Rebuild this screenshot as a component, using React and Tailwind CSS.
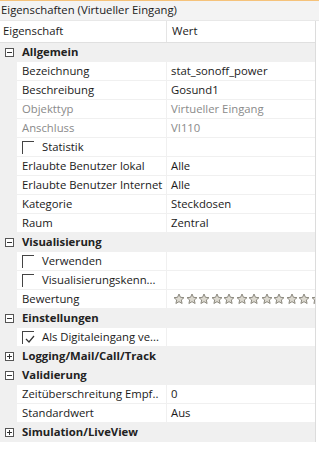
import React from "react";

const F = { fontFamily: '"Open Sans", "Noto Sans", sans-serif' };

function Box({ plus }) {
  return (
    <div className="w-[9px] h-[9px] border border-[#555] relative bg-white">
      <div className="absolute left-[1px] top-[3px] w-[5px] h-[1px] bg-[#333]" />
      {plus && <div className="absolute left-[3px] top-[1px] w-[1px] h-[5px] bg-[#333]" />}
    </div>
  );
}

function Group({ label, plus }) {
  return (
    <div className="h-[19px] flex items-center bg-[#f0f0f0] border-b border-[#f0f0f0]">
      <div className="w-[17px] flex justify-center pl-[1px]">
        <Box plus={plus} />
      </div>
      <div className="pl-[5px] font-bold text-[#222]">{label}</div>
    </div>
  );
}

function Check({ checked }) {
  return (
    <div className="w-[12px] h-[13px] shrink-0 border-l border-t border-[#444] relative mr-[8px]">
      {checked && (
        <svg width="10" height="10" viewBox="0 0 10 10" className="absolute left-[2px] top-[2px]">
          <path d="M1 5 L4 8 L9 2" fill="none" stroke="#333" strokeWidth="1.2" />
        </svg>
      )}
    </div>
  );
}

function Row({ name, value, gray, check, checked, children }) {
  return (
    <div className="h-[19px] flex bg-[#f0f0f0]">
      <div className="w-[17px] shrink-0" />
      <div className="flex-1 min-w-0 flex bg-white border-b border-[#f0f0f0]">
        <div className={`w-[150px] shrink-0 flex items-center pl-[5px] border-r border-[#f0f0f0] whitespace-nowrap overflow-hidden ${gray ? "text-[#8a8a8a]" : "text-[#1a1a1a]"}`}>
          {check && <Check checked={checked} />}
          {name}
        </div>
        <div className={`flex-1 min-w-0 flex items-center pl-[4px] whitespace-nowrap overflow-hidden ${gray ? "text-[#8a8a8a]" : "text-[#1a1a1a]"}`}>
          {value}
          {children}
        </div>
      </div>
    </div>
  );
}

function Star() {
  return (
    <svg width="12" height="12" viewBox="0 0 24 24" className="shrink-0">
      <path
        d="M12 2 L14.9 8.6 L22 9.3 L16.6 14 L18.2 21 L12 17.3 L5.8 21 L7.4 14 L2 9.3 L9.1 8.6 Z"
        fill="#dcd9d0"
        stroke="#8d8a80"
        strokeWidth="2"
        strokeLinejoin="round"
      />
    </svg>
  );
}

export default function App() {
  return (
    <div className="w-[319px] h-[457px] bg-white text-[11.3px] overflow-hidden" style={F}>
      <div className="h-[1px] bg-[#f5c27a]" />
      <div className="h-[20px] bg-[#f3f3f3] flex items-center pl-[1px] text-[#1a1a1a] border-b border-[#e8e8e8]">
        Eigenschaften (Virtueller Eingang)
      </div>
      <div className="flex">
        <div className="w-[316px] border-r border-[#dcdcdc]">
          <div className="h-[22px] flex border-b border-[#e0e0e0] bg-white">
            <div className="w-[167px] pl-[3px] flex items-center border-r border-[#e5e5e5] text-[#1a1a1a]">Eigenschaft</div>
            <div className="flex-1 pl-[5px] flex items-center text-[#1a1a1a]">Wert</div>
          </div>
          <Group label="Allgemein" />
          <Row name="Bezeichnung" value="stat_sonoff_power" />
          <Row name="Beschreibung" value="Gosund1" />
          <Row name="Objekttyp" value="Virtueller Eingang" gray />
          <Row name="Anschluss" value="VI110" gray />
          <Row name="Statistik" check />
          <Row name="Erlaubte Benutzer lokal" value="Alle" />
          <Row name="Erlaubte Benutzer Internet" value="Alle" />
          <Row name="Kategorie" value="Steckdosen" />
          <Row name="Raum" value="Zentral" />
          <Group label="Visualisierung" />
          <Row name="Verwenden" check />
          <Row name="Visualisierungskenn..." check />
          <Row name="Bewertung">
            <div className="flex pl-[2px] gap-[0.5px]">
              {Array.from({ length: 13 }).map((_, i) => (
                <Star key={i} />
              ))}
            </div>
          </Row>
          <Group label="Einstellungen" />
          <Row name="Als Digitaleingang ve..." check checked />
          <Group label="Logging/Mail/Call/Track" plus />
          <Group label="Validierung" />
          <Row name="Zeitüberschreitung Empf.." value="0" />
          <Row name="Standardwert" value="Aus" />
          <Group label="Simulation/LiveView" plus />
        </div>
        <div className="flex-1" />
      </div>
    </div>
  );
}
